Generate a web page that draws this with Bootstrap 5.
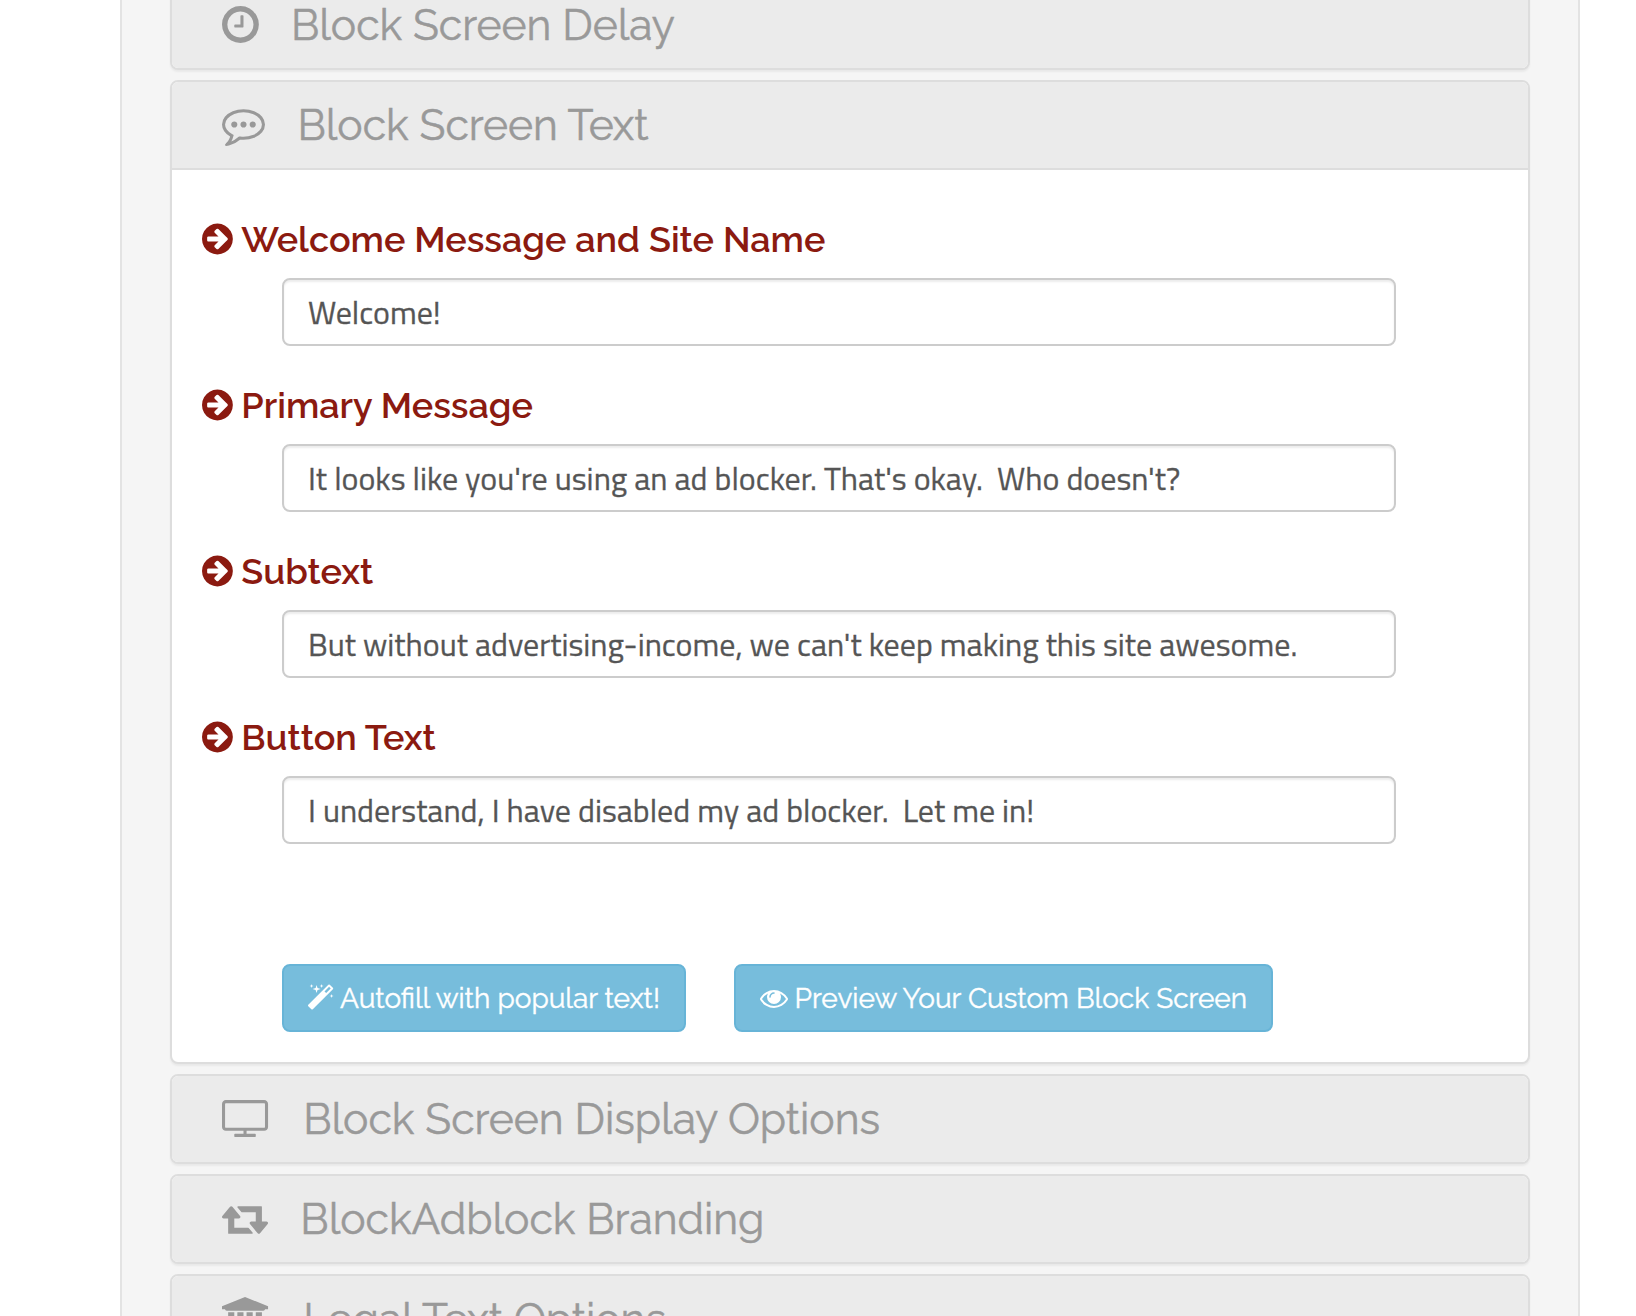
<!DOCTYPE html>
<html lang="en">
<head>
  <meta charset="UTF-8" />
  <meta name="viewport" content="width=device-width, initial-scale=1.0"/>
  <title>BlockAdblock - Configure</title>
  <link href="https://cdn.jsdelivr.net/npm/bootstrap@5.3.3/dist/css/bootstrap.min.css" rel="stylesheet">
  <style>
    body {
      font-family: Raleway, Lato, "Open Sans", sans-serif;
      background: #fff;
      height: 100vh;
      overflow: hidden;
    }
    .settings-well {
      width: 1460px;
      height: 100vh;
      margin-left: 120px;
      padding: 0 48px;
      background: #f5f5f5;
      border: solid #e3e3e3;
      border-width: 0 2px;
      overflow: hidden;
    }
    .panel-stack {
      gap: 10px;
      margin-top: -20px;
    }
    .panel-stack .card {
      border: 2px solid #ddd;
      border-radius: 8px;
      box-shadow: 0 2px 2px rgba(0, 0, 0, .05);
      flex-shrink: 0;
    }
    .panel-stack .card-header {
      height: 86px;
      padding: 0 50px;
      background: #ebebeb;
      border: 0;
      border-radius: 6px;
      color: #999;
    }
    .panel-stack .card-header.is-open {
      height: 88px;
      border-bottom: 2px solid #ddd;
      border-radius: 6px 6px 0 0;
    }
    .card-header h4 {
      font-size: 42.6px;
      font-weight: 400;
      line-height: 1;
      -webkit-text-stroke: .5px;
    }
    .fa-svg {
      display: block;
      flex: none;
      height: 1em;
      fill: currentColor;
    }
    .card-header .fa-svg {
      font-size: 43px;
      margin: -1px 31.500px 0 0;
    }
    .panel-stack .card-body {
      padding: 51px 30px 30px;
    }
    .field-label {
      gap: 8.5px;
      margin-bottom: 21px;
      color: #8b1a10;
      font-size: 36px;
      font-weight: 600;
      line-height: 36px;
    }
    .field-label span {
      margin-top: -1px;
    }
    .field-input {
      width: 1114px;
      height: 68px;
      margin: 0 0 41px 80px;
      padding: 0 24px;
      border: 2px solid #ccc;
      border-radius: 8px;
      box-shadow: inset 0 2px 2px rgba(0, 0, 0, .075);
      color: #555;
      font-family: "Titillium Web", "Open Sans", sans-serif;
      font-size: 32px;
      -webkit-text-stroke: .3px;
    }
    .button-row {
      gap: 48px;
      margin: 120px 0 0 80px;
    }
    .btn-preview {
      --bs-btn-color: #fff;
      --bs-btn-bg: #77bddc;
      --bs-btn-border-color: #67b4d7;
      --bs-btn-hover-color: #fff;
      --bs-btn-hover-bg: #5fb0d5;
      --bs-btn-hover-border-color: #4fa6ce;
      gap: 6.5px;
      height: 68px;
      padding: 0 24px;
      border-width: 2px;
      border-radius: 8px;
      font-size: 28px;
      line-height: 1;
      white-space: nowrap;
    }
    .btn-preview span {
      margin-top: 2px;
      -webkit-text-stroke: .4px;
    }
  </style>
</head>

<body>
  <div class="settings-well">
    <div class="panel-stack d-flex flex-column">

      <!-- Delay -->
      <div class="card">
        <div class="card-header d-flex align-items-center">
          <svg class="fa-svg" viewBox="128 0 1558 1792"><path d="M1024 544v448q0 14-9 23t-23 9h-320q-14 0-23-9t-9-23v-64q0-14 9-23t23-9h224v-352q0-14 9-23t23-9h64q14 0 23 9t9 23zm416 352q0-148-73-273t-198-198-273-73-273 73-198 198-73 273 73 273 198 198 273 73 273-73 198-198 73-273zm224 0q0 209-103 385.500t-279.500 279.500-385.500 103-385.500-103-279.500-279.500-103-385.500 103-385.500 279.500-279.500 385.500-103 385.500 103 279.500 279.500 103 385.500z"/></svg>
          <h4 class="mb-0">Block Screen Delay</h4>
        </div>
      </div>

      <!-- Text -->
      <div class="card">
        <div class="card-header is-open d-flex align-items-center">
          <svg class="fa-svg" viewBox="0 0 1830 1792"><path d="M640 896q0 53-37.500 90.500t-90.500 37.500-90.500-37.500-37.500-90.500 37.500-90.500 90.500-37.500 90.500 37.500 37.500 90.500zm384 0q0 53-37.500 90.500t-90.500 37.500-90.500-37.500-37.500-90.500 37.500-90.500 90.500-37.500 90.500 37.500 37.500 90.500zm384 0q0 53-37.500 90.500t-90.500 37.500-90.500-37.500-37.500-90.500 37.500-90.500 90.500-37.500 90.500 37.500 37.500 90.500zm-512-512q-204 0-381.500 69.500t-282 187.500-104.500 255q0 112 71.500 213.500t201.500 175.500l87 50-27 96q-24 91-70 172 152-63 275-171l43-38 57 6q69 8 130 8 204 0 381.500-69.500t282-187.500 104.500-255-104.500-255-282-187.500-381.500-69.500zm896 512q0 174-120 321.500t-326 233-450 85.500q-70 0-145-8-198 175-460 242-49 14-114 22h-5q-15 0-27-10.500t-16-27.500v-1q-3-4-.5-12t2-10 4.500-9.500l6-9 7-8.500 8-9q7-8 31-34.500t34.500-38 31-39.500 32.500-51 27-59 26-76q-157-89-247.500-220t-90.500-281q0-174 120-321.500t326-233 450-85.500 450 85.500 326 233 120 321.500z"/></svg>
          <h4 class="mb-0">Block Screen Text</h4>
        </div>
        <div class="card-body">
          <label for="welcome" class="field-label d-flex align-items-center">
            <svg class="fa-svg" viewBox="128 0 1536 1792"><use href="#arrow-circle"/></svg>
            <span>Welcome Message and Site Name</span>
          </label>
          <input id="welcome" type="text" class="form-control field-input" value="Welcome!">

          <label for="primary" class="field-label d-flex align-items-center">
            <svg class="fa-svg" viewBox="128 0 1536 1792"><use href="#arrow-circle"/></svg>
            <span>Primary Message</span>
          </label>
          <input id="primary" type="text" class="form-control field-input" value="It looks like you're using an ad blocker. That's okay.  Who doesn't?">

          <label for="subtext" class="field-label d-flex align-items-center">
            <svg class="fa-svg" viewBox="128 0 1536 1792"><use href="#arrow-circle"/></svg>
            <span>Subtext</span>
          </label>
          <input id="subtext" type="text" class="form-control field-input" value="But without advertising-income, we can't keep making this site awesome.">

          <label for="button_text" class="field-label d-flex align-items-center">
            <svg class="fa-svg" viewBox="128 0 1536 1792"><use href="#arrow-circle"/></svg>
            <span>Button Text</span>
          </label>
          <input id="button_text" type="text" class="form-control field-input mb-0" value="I understand, I have disabled my ad blocker.  Let me in!">

          <div class="button-row d-flex">
            <button type="button" class="btn btn-preview d-flex align-items-center">
              <svg class="fa-svg" viewBox="91 0 1637 1792"><path d="M1254 581l293-293-107-107-293 293zm447-293q0 27-18 45l-1286 1286q-18 18-45 18t-45-18l-198-198q-18-18-18-45t18-45l1286-1286q18-18 45-18t45 18l198 198q18 18 18 45zm-1351-190l98 30-98 30-30 98-30-98-98-30 98-30 30-98zm350 162l196 60-196 60-60 196-60-196-196-60 196-60 60-196zm930 478l98 30-98 30-30 98-30-98-98-30 98-30 30-98zm-640-640l98 30-98 30-30 98-30-98-98-30 98-30 30-98z"/></svg>
              <span>Autofill with popular text!</span>
            </button>
            <button type="button" class="btn btn-preview d-flex align-items-center">
              <svg class="fa-svg" viewBox="0 0 1792 1792"><path d="M1664 960q-152-236-381-353 61 104 61 225 0 185-131.500 316.500t-316.500 131.500-316.500-131.500-131.500-316.500q0-121 61-225-229 117-381 353 133 205 333.500 326.500t434.500 121.500 434.500-121.500 333.500-326.500zm-720-384q0-20-14-34t-34-14q-125 0-214.500 89.500t-89.500 214.500q0 20 14 34t34 14 34-14 14-34q0-86 61-147t147-61q20 0 34-14t14-34zm848 384q0 34-20 69-140 230-376.500 368.500t-499.500 138.500-499.500-139-376.500-368q-20-35-20-69t20-69q140-229 376.500-368t499.500-139 499.500 139 376.500 368q20 35 20 69z"/></svg>
              <span>Preview Your Custom Block Screen</span>
            </button>
          </div>
        </div>
      </div>

      <!-- Display options -->
      <div class="card">
        <div class="card-header d-flex align-items-center">
          <svg class="fa-svg" viewBox="0 0 2070 1792"><path d="M1792 1248v-960q0-13-9.500-22.500t-22.500-9.500h-1600q-13 0-22.500 9.500t-9.500 22.500v960q0 13 9.500 22.500t22.500 9.500h1600q13 0 22.500-9.500t9.500-22.500zm128-960v960q0 66-47 113t-113 47h-736v128h352q14 0 23 9t9 23v64q0 14-9 23t-23 9h-832q-14 0-23-9t-9-23v-64q0-14 9-23t23-9h352v-128h-736q-66 0-113-47t-47-113v-960q0-66 47-113t113-47h1600q66 0 113 47t47 113z"/></svg>
          <h4 class="mb-0">Block Screen Display Options</h4>
        </div>
      </div>

      <!-- Branding -->
      <div class="card">
        <div class="card-header d-flex align-items-center">
          <svg class="fa-svg" viewBox="0 0 1950 1792"><path d="M1280 1504q0 13-9.500 22.500t-22.500 9.500h-960q-8 0-13.500-2t-9-7-5.500-8-3-11.500-1-11.500v-600h-192q-26 0-45-19t-19-45q0-24 15-41l320-384q19-22 49-22t49 22l320 384q15 17 15 41 0 26-19 45t-45 19h-192v384h576q16 0 25 11l160 192q7 10 7 21zm640-416q0 24-15 41l-320 384q-20 23-49 23t-49-23l-320-384q-15-17-15-41 0-26 19-45t45-19h192v-384h-576q-16 0-25-12l-160-192q-7-9-7-20 0-13 9.500-22.500t22.500-9.500h960q8 0 13.500 2t9 7 5.500 8 3 11.500 1 11.500v600h192q26 0 45 19t19 45z"/></svg>
          <h4 class="mb-0">BlockAdblock Branding</h4>
        </div>
      </div>

      <!-- Legal -->
      <div class="card">
        <div class="card-header d-flex align-items-center">
          <svg class="fa-svg" viewBox="0 0 2070 1792"><path d="M960 0l960 384v128h-128q0 26-20.500 45t-48.500 19h-1526q-28 0-48.500-19t-20.500-45h-128v-128zm-704 640h256v768h128v-768h256v768h128v-768h256v768h128v-768h256v768h59q28 0 48.500 19t20.500 45v64h-1664v-64q0-26 20.500-45t48.500-19h59v-768zm1595 960q28 0 48.500 19t20.500 45v128h-1920v-128q0-26 20.500-45t48.500-19h1782z"/></svg>
          <h4 class="mb-0">Legal Text Options</h4>
        </div>
      </div>

    </div>
  </div>

  <!-- Shared arrow icon for the field labels -->
  <svg class="d-none">
    <symbol id="arrow-circle" overflow="visible"><path d="M1413 896q0-27-18-45l-91-91-362-362q-18-18-45-18t-45 18l-91 91q-18 18-18 45t18 45l189 189h-502q-26 0-45 19t-19 45v128q0 26 19 45t45 19h502l-189 189q-19 19-19 45t19 45l91 91q18 18 45 18t45-18l362-362 91-91q18-18 18-45zm251 0q0 209-103 385.500t-279.500 279.500-385.500 103-385.500-103-279.500-279.500-103-385.500 103-385.500 279.500-279.500 385.500-103 385.500 103 279.500 279.500 103 385.500z"/></symbol>
  </svg>

  <script src="https://cdn.jsdelivr.net/npm/bootstrap@5.3.3/dist/js/bootstrap.bundle.min.js"></script>
</body>
</html>
